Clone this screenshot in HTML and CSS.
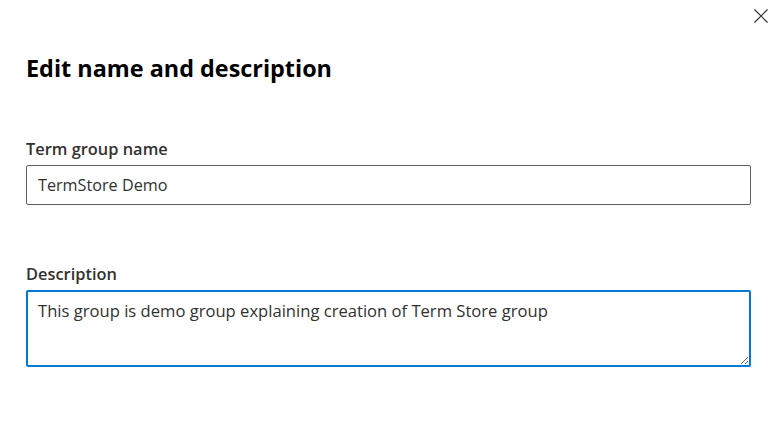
FILE: index.html
```html
<!DOCTYPE html>
<html lang="en">
<head>
<meta charset="utf-8">
<title>Edit name and description</title>
<link rel="stylesheet" href="styles.css">
</head>
<body>
<div class="panel">
  <div class="topbar">
    <button class="close" aria-label="Close">
      <svg width="16" height="16" viewBox="0 0 16 16"><path d="M1.5 1.5 L14.5 14.5 M14.5 1.5 L1.5 14.5" stroke="#323130" stroke-width="1.2" fill="none"/></svg>
    </button>
  </div>
  <h1 class="title">Edit name and description</h1>
  <div class="field field-first">
    <label class="label" for="name">Term group name</label>
    <input class="text-input" id="name" type="text" value="TermStore Demo">
  </div>
  <div class="field field-second">
    <label class="label" for="desc">Description</label>
    <textarea class="text-area" id="desc">This group is demo group explaining creation of Term Store group</textarea>
  </div>
</div>
</body>
</html>
```
FILE: styles.css
```css
html, body {
  margin: 0;
  padding: 0;
  background: #ffffff;
}
body {
  font-family: "Open Sans", "Noto Sans", sans-serif;
  color: #323130;
}
.panel {
  padding: 0 33px 0 26px;
  width: 784px;
  box-sizing: border-box;
}
.topbar {
  display: flex;
  justify-content: flex-end;
  height: 53px;
  margin-right: -33px;
}
.close {
  width: 40px;
  height: 32px;
  border: 0;
  background: transparent;
  padding: 0;
  display: flex;
  align-items: center;
  justify-content: center;
  margin-right: 3px;
}
.title {
  margin: 0;
  font-size: 23.4px;
  line-height: 30px;
  font-weight: 700;
  color: #000000;
}
.field {
  display: flex;
  flex-direction: column;
}
.field-first {
  margin-top: 53px;
}
.field-second {
  margin-top: 56px;
}
.label {
  font-size: 16.4px;
  line-height: 25px;
  font-weight: 600;
  color: #323130;
  margin-bottom: 4px;
}
.text-input {
  box-sizing: border-box;
  height: 40px;
  width: 100%;
  border: 1px solid #605e5c;
  border-radius: 2px;
  padding: 0 11px;
  font-family: inherit;
  font-size: 16.2px;
  color: #323130;
  outline: none;
  margin: 0;
}
.text-area {
  box-sizing: border-box;
  height: 77px;
  width: 100%;
  border: 2px solid #0078d4;
  border-radius: 2px;
  padding: 7px 10px 5px;
  font-family: inherit;
  font-size: 16.6px;
  line-height: 24px;
  color: #323130;
  outline: none;
  margin: 0;
  resize: vertical;
  display: block;
}
```
